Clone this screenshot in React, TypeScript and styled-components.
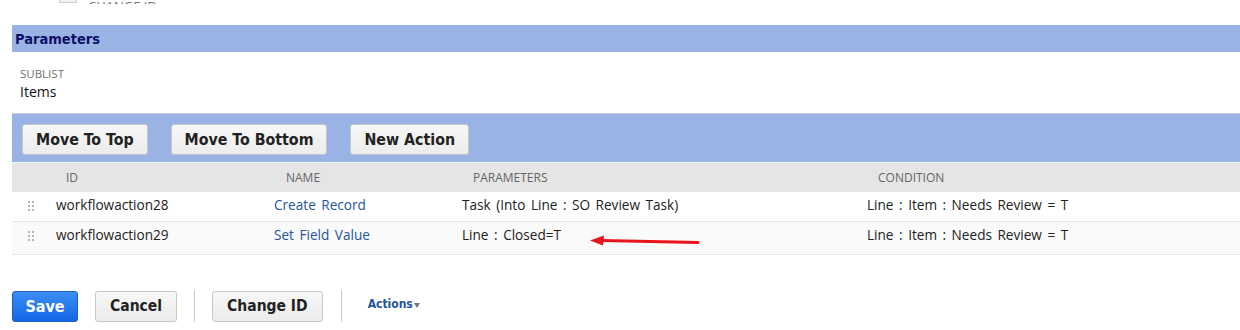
import React from 'react';
import styled, { createGlobalStyle } from 'styled-components';

const GlobalStyle = createGlobalStyle`
  body {
    margin: 0;
    background: #ffffff;
    font-family: 'Open Sans', 'Liberation Sans', sans-serif;
  }
`;

interface ActionRow {
  id: string;
  name: string;
  parameters: string;
  condition: string;
}

const rows: ActionRow[] = [
  { id: 'workflowaction28', name: 'Create Record', parameters: 'Task (Into Line : SO Review Task)', condition: 'Line : Item : Needs Review = T' },
  { id: 'workflowaction29', name: 'Set Field Value', parameters: 'Line : Closed=T', condition: 'Line : Item : Needs Review = T' },
];

const Page = styled.div`
  padding-left: 12px;
`;

const ClippedTop = styled.div`
  height: 4px;
  overflow: hidden;
  display: flex;
  align-items: flex-end;
  gap: 11px;
  padding-left: 47px;

  .box {
    width: 16px;
    height: 14px;
    border: 1px solid #cfcfcf;
    background: #f2f2f2;
    margin-bottom: 1px;
  }

  span {
    font-size: 13px;
    color: #777;
    line-height: 13px;
    margin-bottom: -9px;
  }
`;

const SectionHeader = styled.div`
  margin-top: 21px;
  height: 27px;
  background: #99b3e5;
  display: flex;
  align-items: center;
  padding-left: 3px;
  font-family: 'DejaVu Sans Condensed', 'DejaVu Sans', sans-serif;
  font-weight: bold;
  font-size: 14.5px;
  color: #0f0f66;
`;

const FieldBlock = styled.div`
  padding: 14px 8px 12px;
  height: 35px;
`;

const FieldLabel = styled.div`
  font-size: 11.5px;
  color: #6f6f6f;
  line-height: 15px;
  text-transform: uppercase;
`;

const FieldValue = styled.div`
  font-size: 14px;
  color: #111;
  line-height: 21px;
`;

const ButtonBar = styled.div`
  border-top: 1px solid #c8cfdc;
  background: #99b3e5;
  height: 48px;
  display: flex;
  align-items: center;
  gap: 23px;
  padding-left: 10px;
  border-bottom: 1px solid #eef1f8;
`;

const GrayButton = styled.button<{ $footer?: boolean }>`
  height: 31px;
  margin-top: ${p => (p.$footer ? 0 : 2)}px;
  padding: 0 ${p => (p.$footer ? 14 : 13)}px;
  background: linear-gradient(#f7f7f7, #ececec);
  border: 1px solid #c6c6c6;
  border-radius: 3px;
  font-family: 'DejaVu Sans Condensed', 'DejaVu Sans', sans-serif;
  font-weight: bold;
  font-size: ${p => (p.$footer ? 15.5 : 15.8)}px;
  color: #222;
  cursor: pointer;
`;

const Table = styled.div`
  position: relative;
`;

const Grid = styled.div`
  display: grid;
  grid-template-columns: 44px 218px 188px 405px 1fr;
  align-items: center;
`;

const HeadRow = styled(Grid)`
  height: 29px;
  background: #e5e5e5;
  font-size: 12px;
  color: #666;
  text-transform: uppercase;
`;

const HeadCell = styled.div<{ $indent?: number }>`
  padding-left: ${p => p.$indent ?? 0}px;
`;

const BodyRow = styled(Grid)<{ $alt?: boolean }>`
  height: ${p => (p.$alt ? 33 : 30)}px;
  background: ${p => (p.$alt ? '#fafafa' : '#ffffff')};
  border-bottom: 1px solid #e6e6e6;
  font-size: 13.6px;
  word-spacing: 2px;
  color: #222;
  align-items: start;
  padding-top: 3px;
  box-sizing: border-box;
`;

const Handle = styled.div`
  width: 7px;
  height: 11px;
  margin: 5px 0 0 15px;
  background-image: radial-gradient(circle, #b5b5b5 1px, transparent 1.2px);
  background-size: 4px 4px;
`;

const Cell = styled.div`
  white-space: nowrap;
`;

const LinkCell = styled(Cell)`
  color: #255599;
`;

const Arrow = styled.svg`
  position: absolute;
  left: 576px;
  top: 71px;
`;

const Footer = styled.div`
  margin-top: 35px;
  display: flex;
  align-items: center;
  height: 32px;
`;

const SaveButton = styled.button`
  height: 31px;
  width: 66px;
  background: linear-gradient(#3b8ef5, #1467e6);
  border: 1px solid #1c5fc9;
  border-radius: 3px;
  color: #fff;
  font-family: 'DejaVu Sans Condensed', 'DejaVu Sans', sans-serif;
  font-weight: bold;
  font-size: 16px;
  margin-right: 17px;
  cursor: pointer;
`;

const Divider = styled.div<{ $before: number }>`
  width: 1px;
  height: 32px;
  background: #c9c9c9;
  margin: 0 17px 0 ${p => p.$before}px;
`;

const ActionsLink = styled.a`
  margin-left: 9px;
  margin-top: -5px;
  font-family: 'DejaVu Sans Condensed', 'DejaVu Sans', sans-serif;
  font-weight: bold;
  font-size: 12px;
  color: #255599;
  display: flex;
  align-items: center;
  gap: 1px;

  &::after {
    content: '';
    border-left: 3.5px solid transparent;
    border-right: 3.5px solid transparent;
    border-top: 5px solid #777;
    margin-top: 3px;
  }
`;

const App: React.FC = () => {
  return (
    <Page>
      <GlobalStyle />
      <ClippedTop>
        <div className="box" />
        <span>CHANGE ID</span>
      </ClippedTop>
      <SectionHeader>Parameters</SectionHeader>
      <FieldBlock>
        <FieldLabel>Sublist</FieldLabel>
        <FieldValue>Items</FieldValue>
      </FieldBlock>
      <ButtonBar>
        <GrayButton>Move To Top</GrayButton>
        <GrayButton>Move To Bottom</GrayButton>
        <GrayButton>New Action</GrayButton>
      </ButtonBar>
      <Table>
        <HeadRow>
          <HeadCell />
          <HeadCell $indent={10}>ID</HeadCell>
          <HeadCell $indent={12}>Name</HeadCell>
          <HeadCell $indent={11}>Parameters</HeadCell>
          <HeadCell $indent={11}>Condition</HeadCell>
        </HeadRow>
        {rows.map((r, i) => (
          <BodyRow key={r.id} $alt={i % 2 === 1}>
            <Handle />
            <Cell>{r.id}</Cell>
            <LinkCell>{r.name}</LinkCell>
            <Cell>{r.parameters}</Cell>
            <Cell>{r.condition}</Cell>
          </BodyRow>
        ))}
        <Arrow width="124" height="14" viewBox="0 0 124 14">
          <path d="M14 6.5 L110 8.5" stroke="#e8141b" strokeWidth="3" strokeLinecap="round" />
          <path d="M2 6.5 L16 1.5 L15 11.5 Z" fill="#e8141b" />
        </Arrow>
      </Table>
      <Footer>
        <SaveButton>Save</SaveButton>
        <GrayButton $footer>Cancel</GrayButton>
        <Divider $before={17} />
        <GrayButton $footer>Change ID</GrayButton>
        <Divider $before={18} />
        <ActionsLink>Actions</ActionsLink>
      </Footer>
    </Page>
  );
};

export default App;
